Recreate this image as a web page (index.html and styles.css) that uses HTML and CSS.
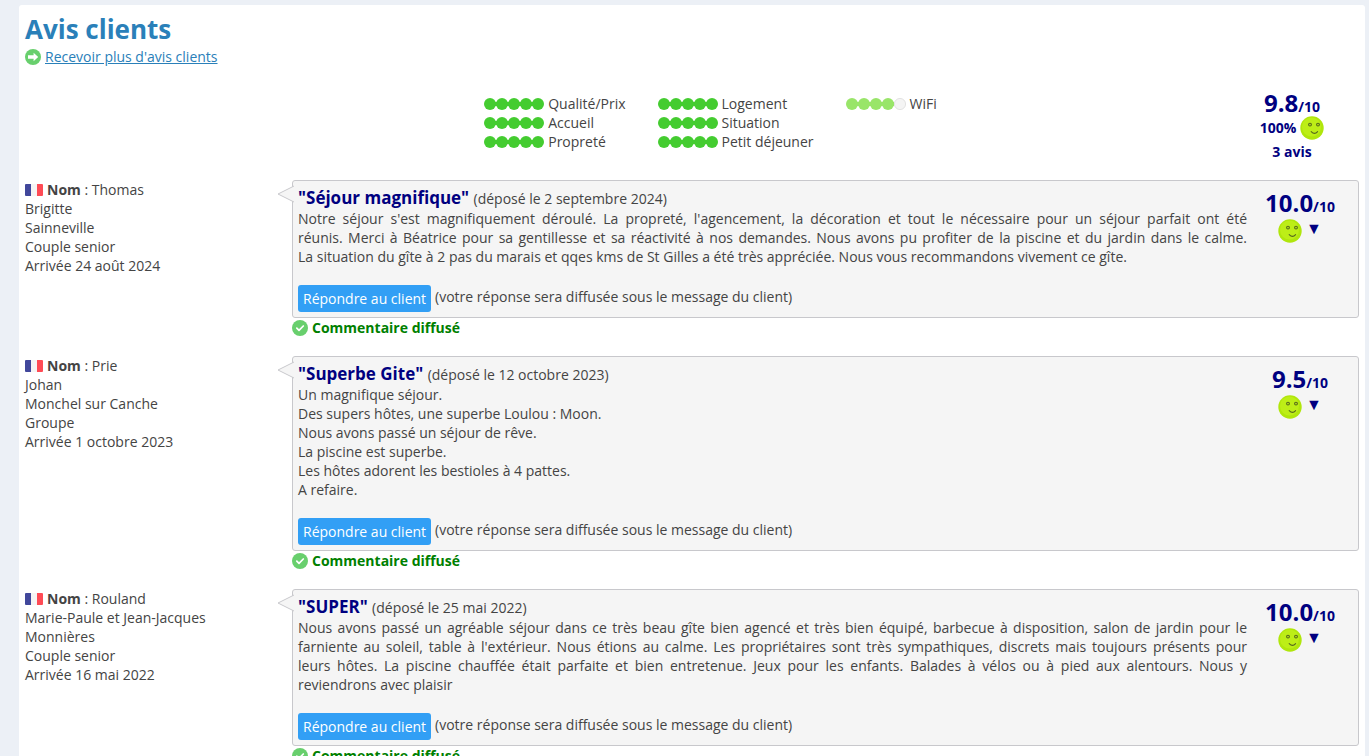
FILE: index.html
```
<!DOCTYPE html>
<html lang="fr">
<head>
  <meta charset="UTF-8" />
  <meta name="viewport" content="width=device-width, initial-scale=1.0" />
  <title>Avis clients</title>
  <link rel="stylesheet" href="styles.css">
</head>
<body>
  <svg class="defs" aria-hidden="true">
    <symbol id="smile" viewBox="0 0 24 24">
      <circle cx="12" cy="12" r="11.7" fill="#b0e60c" />
      <circle cx="11.5" cy="11" r="9.5" fill="#bdee17" />
      <g fill="none" stroke="#56681c" stroke-width="1.1">
        <circle cx="10" cy="8.6" r="1.4" />
        <circle cx="18" cy="8.6" r="1.4" />
        <path d="M11.2 15.6q3.4 3.6 6.4 0" stroke-linecap="round" />
      </g>
    </symbol>
    <symbol id="check" viewBox="0 0 16 16">
      <circle cx="8" cy="8" r="8" fill="#68cf6d" />
      <path d="M4.8 8.2l2.2 2.2 4.3-4.4" fill="none" stroke="#fff" stroke-width="1.7" stroke-linecap="round" stroke-linejoin="round" />
    </symbol>
    <symbol id="flag" viewBox="0 0 18 12">
      <path d="M1 0h5v12H1a1 1 0 0 1-1-1V1a1 1 0 0 1 1-1z" fill="#41479b" />
      <path d="M6 0h6v12H6z" fill="#f5f5f5" />
      <path d="M12 0h5a1 1 0 0 1 1 1v10a1 1 0 0 1-1 1h-5z" fill="#ff4b55" />
    </symbol>
    <symbol id="dots" viewBox="0 0 60 12">
      <path d="M6 6h48" stroke="#44cc30" stroke-width="4" />
      <g fill="#44cc30">
        <circle cx="6" cy="6" r="6" /><circle cx="18" cy="6" r="6" /><circle cx="30" cy="6" r="6" /><circle cx="42" cy="6" r="6" /><circle cx="54" cy="6" r="6" />
      </g>
    </symbol>
    <symbol id="dots4" viewBox="0 0 60 12">
      <path d="M6 6h42" stroke="#99e569" stroke-width="4" />
      <circle cx="54" cy="6" r="5.6" fill="#f4f4f4" stroke="#dcdcdc" stroke-width=".8" />
      <g fill="#99e569">
        <circle cx="6" cy="6" r="6" /><circle cx="18" cy="6" r="6" /><circle cx="30" cy="6" r="6" /><circle cx="42" cy="6" r="6" />
      </g>
    </symbol>
  </svg>

  <main class="panel">
    <h1>Avis clients</h1>
    <div class="line">
      <svg class="icon" viewBox="0 0 16 16"><circle cx="8" cy="8" r="8" fill="#68cf6d" /><path d="M3 6.2h5.6V3.8L13.2 8l-4.6 4.2V9.8H3z" fill="#fff" /></svg>
      <a href="#">Recevoir plus d'avis clients</a>
    </div>

    <section class="summary">
      <div class="ratings">
        <ul>
          <li><svg class="dots"><use href="#dots" /></svg>Qualité/Prix</li>
          <li><svg class="dots"><use href="#dots" /></svg>Accueil</li>
          <li><svg class="dots"><use href="#dots" /></svg>Propreté</li>
        </ul>
        <ul>
          <li><svg class="dots"><use href="#dots" /></svg>Logement</li>
          <li><svg class="dots"><use href="#dots" /></svg>Situation</li>
          <li><svg class="dots"><use href="#dots" /></svg>Petit déjeuner</li>
        </ul>
        <ul>
          <li><svg class="dots"><use href="#dots4" /></svg>WiFi</li>
        </ul>
      </div>
      <div class="total">
        <div class="grade"><span class="note">9.8</span>/10</div>
        <div class="mood">100% <svg class="smile"><use href="#smile" /></svg></div>
        <div>3 avis</div>
      </div>
    </section>

    <article class="review">
      <div class="client">
        <div class="line"><svg class="flag"><use href="#flag" /></svg><span><b>Nom</b> : Thomas</span></div>
        Brigitte<br>
        Sainneville<br>
        Couple senior<br>
        Arrivée 24 août 2024
      </div>
      <div class="message">
        <div class="bubble">
          <svg class="arrow" viewBox="0 0 17 22"><path d="M17 3L1 11l16 8" fill="#f5f5f5" stroke="#c8c8cc" /></svg>
          <div class="content">
            <h2>"Séjour magnifique" <small>(déposé le 2 septembre 2024)</small></h2>
            <p class="full">Notre séjour s'est magnifiquement déroulé. La propreté, l'agencement, la décoration et tout le nécessaire pour un séjour parfait ont été<br>
            réunis. Merci à Béatrice pour sa gentillesse et sa réactivité à nos demandes. Nous avons pu profiter de la piscine et du jardin dans le calme.</p>
            <p>La situation du gîte à 2 pas du marais et qqes kms de St Gilles a été très appréciée. Nous vous recommandons vivement ce gîte.</p>
            <div class="reply"><button type="button">Répondre au client</button> <span>(votre réponse sera diffusée sous le message du client)</span></div>
          </div>
          <div class="score">
            <div class="grade"><span class="note">10.0</span>/10</div>
            <div class="mood"><svg class="smile"><use href="#smile" /></svg> <span class="more">▼</span></div>
          </div>
        </div>
        <div class="line status"><svg class="icon"><use href="#check" /></svg>Commentaire diffusé</div>
      </div>
    </article>

    <article class="review">
      <div class="client">
        <div class="line"><svg class="flag"><use href="#flag" /></svg><span><b>Nom</b> : Prie</span></div>
        Johan<br>
        Monchel sur Canche<br>
        Groupe<br>
        Arrivée 1 octobre 2023
      </div>
      <div class="message">
        <div class="bubble">
          <svg class="arrow" viewBox="0 0 17 22"><path d="M17 3L1 11l16 8" fill="#f5f5f5" stroke="#c8c8cc" /></svg>
          <div class="content">
            <h2>"Superbe Gite" <small>(déposé le 12 octobre 2023)</small></h2>
            <p>Un magnifique séjour.<br>
            Des supers hôtes, une superbe Loulou : Moon.<br>
            Nous avons passé un séjour de rêve.<br>
            La piscine est superbe.<br>
            Les hôtes adorent les bestioles à 4 pattes.<br>
            A refaire.</p>
            <div class="reply"><button type="button">Répondre au client</button> <span>(votre réponse sera diffusée sous le message du client)</span></div>
          </div>
          <div class="score">
            <div class="grade"><span class="note">9.5</span>/10</div>
            <div class="mood"><svg class="smile"><use href="#smile" /></svg> <span class="more">▼</span></div>
          </div>
        </div>
        <div class="line status"><svg class="icon"><use href="#check" /></svg>Commentaire diffusé</div>
      </div>
    </article>

    <article class="review">
      <div class="client">
        <div class="line"><svg class="flag"><use href="#flag" /></svg><span><b>Nom</b> : Rouland</span></div>
        Marie-Paule et Jean-Jacques<br>
        Monnières<br>
        Couple senior<br>
        Arrivée 16 mai 2022
      </div>
      <div class="message">
        <div class="bubble">
          <svg class="arrow" viewBox="0 0 17 22"><path d="M17 3L1 11l16 8" fill="#f5f5f5" stroke="#c8c8cc" /></svg>
          <div class="content">
            <h2>"SUPER" <small>(déposé le 25 mai 2022)</small></h2>
            <p class="full">Nous avons passé un agréable séjour dans ce très beau gîte bien agencé et très bien équipé, barbecue à disposition, salon de jardin pour le<br>
            farniente au soleil, table à l'extérieur. Nous étions au calme. Les propriétaires sont très sympathiques, discrets mais toujours présents pour<br>
            leurs hôtes. La piscine chauffée était parfaite et bien entretenue. Jeux pour les enfants. Balades à vélos ou à pied aux alentours. Nous y</p>
            <p>reviendrons avec plaisir</p>
            <div class="reply"><button type="button">Répondre au client</button> <span>(votre réponse sera diffusée sous le message du client)</span></div>
          </div>
          <div class="score">
            <div class="grade"><span class="note">10.0</span>/10</div>
            <div class="mood"><svg class="smile"><use href="#smile" /></svg> <span class="more">▼</span></div>
          </div>
        </div>
        <div class="line status"><svg class="icon"><use href="#check" /></svg>Commentaire diffusé</div>
      </div>
    </article>
  </main>
</body>
</html>
```
FILE: styles.css
```
* {
  box-sizing: border-box;
}

html {
  scrollbar-width: none;
}

body {
  margin: 0;
  padding: 5px 4px 5px 19px;
  background: #ecf0f6;
  color: #444;
  font-family: "Open Sans", sans-serif;
  font-size: 14px;
  line-height: 19px;
}

h1, h2, p, ul {
  margin: 0;
  padding: 0;
}

svg {
  display: block;
  flex: none;
}

a {
  color: #2a80b9;
}

.defs {
  position: absolute;
  width: 0;
  height: 0;
}

.panel {
  padding: 6px;
  background: #fff;
  border-radius: 3px;
}

h1 {
  color: #2a80b9;
  font-size: 26px;
  line-height: 36px;
}

.line {
  display: flex;
  align-items: center;
  gap: 4px;
}

.icon {
  width: 16px;
  height: 16px;
}

.flag {
  width: 18px;
  height: 12px;
}

.summary {
  display: flex;
  margin: 20px 0 16px;
}

.ratings {
  flex: 1;
  display: flex;
  justify-content: center;
  gap: 32px;
  padding: 8px 0 0 171px;
}

.ratings ul {
  list-style: none;
}

.ratings li {
  display: flex;
  align-items: center;
  gap: 4px;
}

.dots {
  width: 60px;
  height: 12px;
}

.total, .score {
  color: navy;
  font-weight: bold;
  text-align: center;
}

.total {
  width: 134px;
  padding-top: 3px;
  line-height: 24px;
}

.grade {
  line-height: 14px;
}

.note {
  font-size: 24px;
  line-height: 33px;
}

.total .note {
  line-height: 27px;
}

.mood {
  display: flex;
  justify-content: center;
  gap: 4px;
}

.smile {
  width: 24px;
  height: 24px;
}

.more {
  font-size: 16px;
}

.review {
  display: flex;
  margin-bottom: 19px;
}

.client {
  width: 267px;
  flex: none;
}

.message {
  flex: 1;
}

.bubble {
  position: relative;
  display: flex;
  padding: 5px;
  background: #f5f5f5;
  border: 1px solid #c8c8cc;
  border-radius: 3px;
}

.arrow {
  position: absolute;
  left: -16px;
  top: 2px;
  width: 17px;
  height: 22px;
}

.content {
  flex: 1;
}

h2 {
  color: navy;
  font-size: 17px;
  line-height: 23px;
}

h2 small {
  color: #444;
  font-size: 14px;
  font-weight: normal;
  line-height: 1;
}

.content p {
  text-align: justify;
}

.content .full {
  text-align-last: justify;
}

.reply {
  display: flex;
  gap: 4px;
  margin-top: 19px;
}

.reply span {
  padding-top: 2px;
}

button {
  height: 27px;
  padding: 0 5px;
  border: none;
  border-radius: 3px;
  background: #329ff5;
  color: #fff;
  font: inherit;
  cursor: pointer;
}

.score {
  width: 106px;
}

.status {
  color: green;
  font-weight: bold;
}
```
